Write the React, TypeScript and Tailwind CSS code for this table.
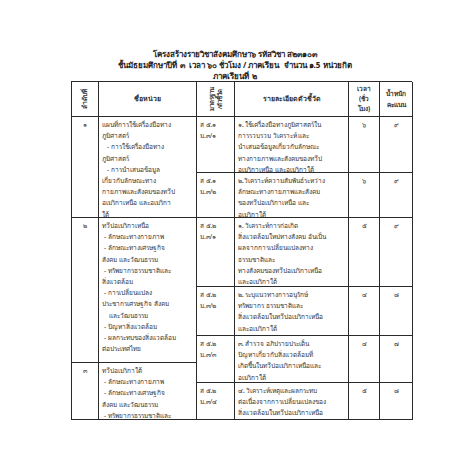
import React from 'react';

const cell = 'border-r border-b border-[#2a2a2a] overflow-hidden';

const units: { start: string; no: string; lines: [string, number][] }[] = [
  {
    start: 'row-start-2 row-span-2',
    no: '๑',
    lines: [
      ['แผนที่การใช้เครื่องมือทาง', 0],
      ['ภูมิศาสตร์', 0],
      ['- การใช้เครื่องมือทาง', 5],
      ['ภูมิศาสตร์', 0],
      ['- การนำเสนอข้อมูล', 5],
      ['เกี่ยวกับลักษณะทาง', 0],
      ['กายภาพและสังคมของทวีป', 0],
      ['อเมริกาเหนือ และอเมริกา', 0],
      ['ใต้', 0],
    ],
  },
  {
    start: 'row-start-4 row-span-3',
    no: '๒',
    lines: [
      ['ทวีปอเมริกาเหนือ', 0],
      ['- ลักษณะทางกายภาพ', 2],
      ['- ลักษณะทางเศรษฐกิจ', 2],
      ['สังคม  และวัฒนธรรม', 0],
      ['- ทรัพยากรธรรมชาติและ', 2],
      ['สิ่งแวดล้อม', 0],
      ['- การเปลี่ยนแปลง', 2],
      ['ประชากรเศรษฐกิจ  สังคม', 0],
      ['และวัฒนธรรม', 7],
      ['- ปัญหาสิ่งแวดล้อม', 2],
      ['- ผลกระทบของสิ่งแวดล้อม', 2],
      ['ต่อประเทศไทย', 0],
    ],
  },
  {
    start: 'row-start-7 row-span-2',
    no: '๓',
    lines: [
      ['ทวีปอเมริกาใต้', 0],
      ['- ลักษณะทางกายภาพ', 2],
      ['- ลักษณะทางเศรษฐกิจ', 2],
      ['สังคม  และวัฒนธรรม', 0],
      ['- ทรัพยากรธรรมชาติและ', 2],
    ],
  },
];

const indicators: { start: string; code: string; lines: string[]; hours: string; score: string }[] = [
  {
    start: 'row-start-2',
    code: 'ม.๓/๑',
    lines: [
      '๑. ใช้เครื่องมือทางภูมิศาสตร์ใน',
      'การรวบรวม วิเคราะห์ และ',
      'นำเสนอข้อมูลเกี่ยวกับลักษณะ',
      'ทางกายภาพและสังคมของทวีป',
      'อเมริกาเหนือ และอเมริกาใต้',
    ],
    hours: '๖',
    score: '๙',
  },
  {
    start: 'row-start-3',
    code: 'ม.๓/๒',
    lines: ['๒.วิเคราะห์ความสัมพันธ์ระหว่าง', 'ลักษณะทางกายภาพและสังคม', 'ของทวีปอเมริกาเหนือ และ', 'อเมริกาใต้'],
    hours: '๖',
    score: '๙',
  },
  {
    start: 'row-start-4',
    code: 'ม.๓/๑',
    lines: [
      '๑. วิเคราะห์การก่อเกิด',
      'สิ่งแวดล้อมใหม่ทางสังคม อันเป็น',
      'ผลจากการเปลี่ยนแปลงทาง',
      'ธรรมชาติและ',
      'ทางสังคมของทวีปอเมริกาเหนือ',
      'และอเมริกาใต้',
    ],
    hours: '๕',
    score: '๙',
  },
  {
    start: 'row-start-5',
    code: 'ม.๓/๒',
    lines: ['๒. ระบุแนวทางการอนุรักษ์', 'ทรัพยากร ธรรมชาติและ', 'สิ่งแวดล้อมในทวีปอเมริกาเหนือ', 'และอเมริกาใต้'],
    hours: '๔',
    score: '๘',
  },
  {
    start: 'row-start-6 row-span-2',
    code: 'ม.๓/๓',
    lines: ['๓. สำรวจ อภิปรายประเด็น', 'ปัญหาเกี่ยวกับสิ่งแวดล้อมที่', 'เกิดขึ้นในทวีปอเมริกาเหนือและ', 'อเมริกาใต้'],
    hours: '๔',
    score: '๗',
  },
  {
    start: 'row-start-8',
    code: 'ม.๓/๔',
    lines: ['๔. วิเคราะห์เหตุและผลกระทบ', 'ต่อเนื่องจากการเปลี่ยนแปลงของ', 'สิ่งแวดล้อมในทวีปอเมริกาเหนือ'],
    hours: '๕',
    score: '๘',
  },
];

export default function App() {
  return (
    <div className="w-[453px] h-[453px] bg-white overflow-hidden text-[#333] font-['Noto_Sans','DejaVu_Sans',sans-serif]">
      <div className="pt-[48px] pl-[71px]">
        <div className="w-[328px] flex flex-col items-center text-[8px] leading-[11px] font-bold text-[#222]">
          <p>โครงสร้างรายวิชาสังคมศึกษา๖ รหัสวิชา ส๒๓๑๐๓</p>
          <p>ชั้นมัธยมศึกษาปีที่ ๓&nbsp; เวลา ๖๐ ชั่วโมง / ภาคเรียน&nbsp; จำนวน ๑.5 หน่วยกิต</p>
          <p>ภาคเรียนที่ ๒</p>
        </div>

        <div className="grid grid-cols-[27px_98px_38px_114px_31px_33px] grid-rows-[35px_56px_45px_69px_49px_27px_20px_37px] w-[341px] border-l border-t border-[#2a2a2a] text-[6.5px] leading-[11.2px]">
          {/* header */}
          <div className={`${cell} col-start-1 row-start-1 flex items-center justify-center`}>
            <span className="-rotate-90 font-bold whitespace-nowrap">ลำดับที่</span>
          </div>
          <div className={`${cell} col-start-2 row-start-1 flex items-center justify-center font-bold text-[7px]`}>ชื่อหน่วย</div>
          <div className={`${cell} col-start-3 row-start-1 flex items-center justify-center`}>
            <div className="-rotate-90 font-bold whitespace-nowrap leading-[8px] text-center text-[6px]">
              <div>มาตรฐาน</div>
              <div>/ตัวชี้วัด</div>
            </div>
          </div>
          <div className={`${cell} col-start-4 row-start-1 flex items-center justify-center font-bold text-[7px]`}>รายละเอียดตัวชี้วัด</div>
          <div className={`${cell} col-start-5 row-start-1 flex flex-col items-center justify-center font-bold leading-[10px]`}>
            <span>เวลา</span>
            <span>(ชั่ว</span>
            <span>โมง)</span>
          </div>
          <div className={`${cell} col-start-6 row-start-1 flex flex-col items-center justify-center font-bold leading-[11px]`}>
            <span>น้ำหนัก</span>
            <span>คะแนน</span>
          </div>

          {/* units */}
          {units.map((u) => (
            <React.Fragment key={u.no}>
              <div className={`${cell} col-start-1 ${u.start} text-center pt-[2px]`}>{u.no}</div>
              <div className={`${cell} col-start-2 ${u.start} pl-[3px] pt-[2px]`}>
                {u.lines.map(([t, ind], i) => (
                  <div key={i} className="whitespace-nowrap" style={{ paddingLeft: ind }}>
                    {t}
                  </div>
                ))}
              </div>
            </React.Fragment>
          ))}

          {/* indicators */}
          {indicators.map((r, i) => (
            <React.Fragment key={i}>
              <div className={`${cell} col-start-3 ${r.start} pl-[3px] pt-[2px] whitespace-nowrap`}>
                <div>{i < 2 ? 'ส ๕.๑' : 'ส ๕.๒'}</div>
                <div>{r.code}</div>
              </div>
              <div className={`${cell} col-start-4 ${r.start} pl-[3px] pt-[2px]`}>
                {r.lines.map((t, j) => (
                  <div key={j} className="whitespace-nowrap">
                    {t}
                  </div>
                ))}
              </div>
              <div className={`${cell} col-start-5 ${r.start} text-center pt-[2px]`}>{r.hours}</div>
              <div className={`${cell} col-start-6 ${r.start} text-center pt-[2px]`}>{r.score}</div>
            </React.Fragment>
          ))}
        </div>
      </div>
    </div>
  );
}
